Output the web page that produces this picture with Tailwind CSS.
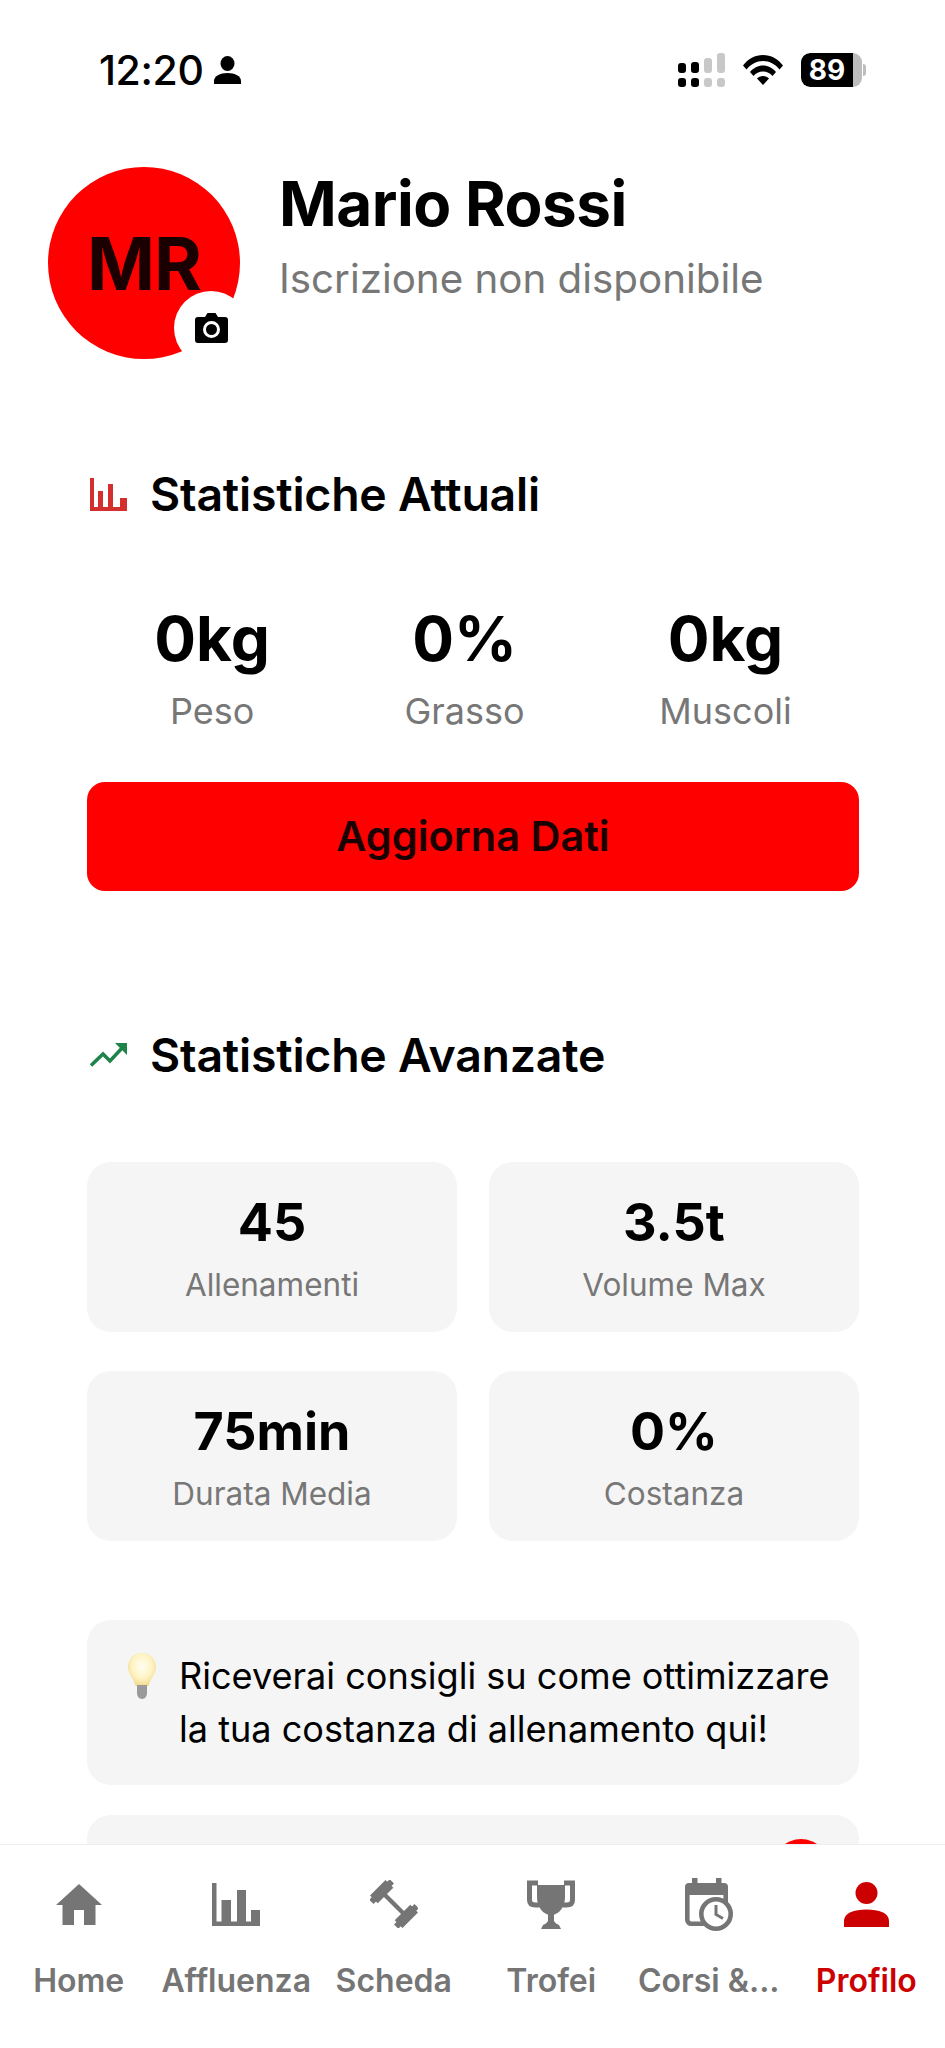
<!DOCTYPE html>
<html lang="it">

<head>
  <meta charset="UTF-8">
  <meta name="viewport" content="width=device-width, initial-scale=1.0">
  <title>Profilo</title>
  <script src="https://cdn.jsdelivr.net/npm/@tailwindcss/browser@4"></script>
</head>

<body class="bg-white text-black font-['Inter','Liberation_Sans',sans-serif]">
  <div class="flex flex-col h-[2048px] w-[945px] overflow-hidden">
    <main class="flex-1 min-h-0 overflow-hidden relative">
      <!-- status bar -->
      <div class="flex items-center justify-between h-[40px] mt-[50px] pl-[99px] pr-[79px]">
        <div class="flex items-center gap-[11px]">
          <span class="text-[41px] leading-[40px] font-medium tracking-[-0.4px]">12:20</span>
          <svg class="w-[27px] h-[28px]" viewBox="0 0 27 28" fill="#000">
            <ellipse cx="13.5" cy="7.5" rx="7" ry="7.5" />
            <path d="M0 28v-3c0-5 6-8 13.5-8S27 20 27 25v3z" />
          </svg>
        </div>
        <div class="flex items-center">
          <svg class="w-[47px] h-[34px]" viewBox="0 0 47 34">
            <rect x="0" y="10" width="8" height="10" rx="3" fill="#000" />
            <rect x="13" y="9" width="8" height="11" rx="3" fill="#000" />
            <rect x="26" y="5" width="8" height="15" rx="3" fill="#c8c8c8" />
            <rect x="39" y="0" width="8" height="20" rx="3" fill="#c8c8c8" />
            <rect x="0" y="25" width="8" height="9" rx="3" fill="#000" />
            <rect x="13" y="25" width="8" height="9" rx="3" fill="#000" />
            <rect x="26" y="25" width="8" height="9" rx="3" fill="#c8c8c8" />
            <rect x="39" y="25" width="8" height="9" rx="3" fill="#c8c8c8" />
          </svg>
          <svg class="w-[40px] h-[30px] ml-[18px]" viewBox="0 0 40 30" fill="#000">
            <path d="M0 10.500C5 4 12 0 20 0s15 4 20 10.500l-3.500 4C32 9 26.500 6 20 6S8 9 3.500 14.500z" />
            <path d="M7 17C10.500 13 15 10.500 20 10.500S29.500 13 33 17l-3.500 4C27 18 24 16.500 20 16.500S13 18 10.500 21z" />
            <path d="M14 23.500C15.500 22 17.500 21 20 21s4.500 1 6 2.500L20 30z" />
          </svg>
          <div class="flex items-center ml-[18px]">
            <div class="flex h-[34px] w-[61px] overflow-hidden rounded-[9px] bg-[#bdbdbd]">
              <div class="flex h-full w-[52px] items-center justify-center rounded-l-[9px] bg-black text-[28px] font-bold leading-none text-white">89</div>
            </div>
            <div class="ml-[1px] h-[12px] w-[3px] rounded-r-full bg-[#bdbdbd]"></div>
          </div>
        </div>
      </div>

      <!-- intestazione -->
      <div class="flex items-start mt-[77px] pl-[48px]">
        <div class="relative flex h-[192px] w-[192px] shrink-0 items-center justify-center rounded-full bg-[#ff0000]">
          <span class="text-[73px] font-bold leading-none tracking-[-1px] text-[#1a0000]">MR</span>
          <div class="absolute left-[126px] top-[124px] flex h-[74px] w-[74px] items-center justify-center rounded-full bg-white">
            <svg class="w-[33px] h-[30px]" viewBox="0 0 33 30">
              <path fill="#000" d="M3 4h7l2.500-4h8L23 4h7a3 3 0 0 1 3 3v20a3 3 0 0 1-3 3H3a3 3 0 0 1-3-3V7a3 3 0 0 1 3-3z" />
              <circle cx="16.500" cy="16.500" r="7" fill="none" stroke="#fff" stroke-width="3" />
            </svg>
          </div>
        </div>
        <div class="ml-[39px]">
          <h1 class="text-[62px] font-bold leading-[74px] tracking-[-0.5px]">Mario Rossi</h1>
          <p class="mt-[13px] text-[40.300px] leading-[50px] text-[#777777]">Iscrizione non disponibile</p>
        </div>
      </div>

      <div class="pl-[87px] pr-[86px]">
        <!-- statistiche attuali -->
        <div class="flex items-center mt-[112px] h-[46px]">
          <svg class="w-[37px] h-[33px] ml-[3px]" viewBox="0 0 37 33" fill="#d32f2f">
            <path d="M0 0h4v29h4V13h5v16h5V6h5v23h7V20h7v13H0z" />
          </svg>
          <h2 class="ml-[23px] text-[46.400px] font-semibold leading-[46px] tracking-[-0.2px]">Statistiche Attuali</h2>
        </div>

        <div class="flex justify-around mt-[87px] text-center">
          <div>
            <div class="text-[62px] font-bold leading-[70px]">0kg</div>
            <div class="mt-[15px] text-[36px] leading-[44px] text-[#777777]">Peso</div>
          </div>
          <div>
            <div class="text-[62px] font-bold leading-[70px]">0%</div>
            <div class="mt-[15px] text-[36px] leading-[44px] text-[#777777]">Grasso</div>
          </div>
          <div>
            <div class="text-[62px] font-bold leading-[70px]">0kg</div>
            <div class="mt-[15px] text-[36px] leading-[44px] text-[#777777]">Muscoli</div>
          </div>
        </div>

        <button class="mt-[49px] flex h-[109px] w-full items-center justify-center rounded-[18px] bg-[#ff0000] text-[41.500px] font-semibold text-[#1a0000]">Aggiorna Dati</button>

        <!-- statistiche avanzate -->
        <div class="flex items-center mt-[141px] h-[46px]">
          <svg class="w-[37px] h-[24px] ml-[3px]" viewBox="0 0 37 24" fill="none">
            <path d="M1 22.500 13 11l7 7L33 4" stroke="#1e8449" stroke-width="3.500" />
            <path d="M25 0h12v12z" fill="#1e8449" />
          </svg>
          <h2 class="ml-[23px] text-[46.400px] font-semibold leading-[46px] tracking-[-0.2px]">Statistiche Avanzate</h2>
        </div>

        <div class="grid grid-cols-2 gap-x-[32px] gap-y-[39px] mt-[84px]">
          <div class="flex h-[170px] flex-col items-center rounded-[24px] bg-[#f5f5f5] pt-[30px]">
            <div class="text-[52px] font-bold leading-[62px]">45</div>
            <div class="mt-[11px] text-[31.500px] leading-[40px] text-[#777777]">Allenamenti</div>
          </div>
          <div class="flex h-[170px] flex-col items-center rounded-[24px] bg-[#f5f5f5] pt-[30px]">
            <div class="text-[52px] font-bold leading-[62px]">3.5t</div>
            <div class="mt-[11px] text-[31.500px] leading-[40px] text-[#777777]">Volume Max</div>
          </div>
          <div class="flex h-[170px] flex-col items-center rounded-[24px] bg-[#f5f5f5] pt-[30px]">
            <div class="text-[52px] font-bold leading-[62px]">75min</div>
            <div class="mt-[11px] text-[31.500px] leading-[40px] text-[#777777]">Durata Media</div>
          </div>
          <div class="flex h-[170px] flex-col items-center rounded-[24px] bg-[#f5f5f5] pt-[30px]">
            <div class="text-[52px] font-bold leading-[62px]">0%</div>
            <div class="mt-[11px] text-[31.500px] leading-[40px] text-[#777777]">Costanza</div>
          </div>
        </div>

        <!-- consiglio -->
        <div class="flex items-start mt-[79px] h-[165px] rounded-[24px] bg-[#f5f5f5] pl-[41px] pt-[33px]">
          <svg class="w-[28px] h-[46px] shrink-0" viewBox="0 0 28 46">
            <defs>
              <radialGradient id="bulb" cx="50%" cy="40%" r="60%">
                <stop offset="0%" stop-color="#fffef2" />
                <stop offset="60%" stop-color="#fff3c4" />
                <stop offset="100%" stop-color="#f0d98c" />
              </radialGradient>
            </defs>
            <path fill="url(#bulb)" d="M14 0C6 0 0 6 0 14c0 7 5 10 7 18 1 2 13 2 14 0 2-8 7-11 7-18C28 6 22 0 14 0z" />
            <path fill="#9a9a9a" d="M9 32h10v8c0 3-2 6-5 6s-5-3-5-6z" />
          </svg>
          <p class="ml-[23px] text-[36.100px] leading-[53px] mt-[-3px]">Riceverai consigli su come ottimizzare<br>la tua costanza di allenamento qui!</p>
        </div>

        <!-- card successiva, tagliata dalla barra -->
        <div class="relative mt-[30px] h-[120px] rounded-[24px] bg-[#f5f5f5]">
          <div class="absolute left-[686px] top-[24px] h-[56px] w-[56px] rounded-full bg-[#ff0000]"></div>
        </div>
      </div>
    </main>

    <!-- barra di navigazione -->
    <nav class="grid h-[204px] shrink-0 grid-cols-6 border-t border-[#eeeeee] bg-white pt-[32px] text-[#757575]">
      <div class="flex flex-col items-center">
        <div class="flex h-[54px] items-center justify-center">
          <svg class="w-[46px] h-[41px]" viewBox="0 0 46 41" fill="#757575">
            <path d="M23 0 46 21h-6.500v20H28V26H18v15H6.500V21H0z" />
          </svg>
        </div>
        <span class="mt-[32px] text-[32px] font-semibold leading-[36px]">Home</span>
      </div>
      <div class="flex flex-col items-center">
        <div class="flex h-[54px] items-center justify-center">
          <svg class="w-[48px] h-[43px]" viewBox="0 0 48 43" fill="#757575">
            <path d="M0 0h4.500v38.500H9.500V17H19v21.500h6V7h9v31.500h5V27h9v16H0z" />
          </svg>
        </div>
        <span class="mt-[32px] text-[32px] font-semibold leading-[36px]">Affluenza</span>
      </div>
      <div class="flex flex-col items-center">
        <div class="flex h-[54px] items-center justify-center">
          <svg class="w-[48px] h-[48px]" viewBox="0 0 48 48" fill="#757575">
            <g transform="rotate(-45 24 24)">
              <rect x="21.800" y="8" width="4.400" height="32" />
              <rect x="13" y="1" width="22" height="11" />
              <rect x="9.500" y="3.500" width="29" height="6" />
              <rect x="13" y="36" width="22" height="11" />
              <rect x="9.500" y="38.500" width="29" height="6" />
            </g>
          </svg>
        </div>
        <span class="mt-[32px] text-[32px] font-semibold leading-[36px]">Scheda</span>
      </div>
      <div class="flex flex-col items-center">
        <div class="flex h-[54px] items-center justify-center">
          <svg class="w-[48px] h-[49px]" viewBox="0 0 48 49" fill="#757575">
            <path d="M11 3H2.500v17c0 3 2 5 6 5h4M37 3h8.500v17c0 3-2 5-6 5h-4" fill="none" stroke="#757575" stroke-width="5" />
            <path d="M10 5h28v12c0 10-6 18-14 18S10 27 10 17z" />
            <path d="M21 33h6v8c1 2 3 3 5 4l2 4H14l2-4c2-1 4-2 5-4z" />
          </svg>
        </div>
        <span class="mt-[32px] text-[32px] font-semibold leading-[36px]">Trofei</span>
      </div>
      <div class="flex flex-col items-center">
        <div class="flex h-[54px] items-center justify-center">
          <svg class="w-[48px] h-[53px]" viewBox="0 0 48 53" fill="#757575">
            <rect x="7" y="0" width="5.500" height="8" />
            <rect x="31" y="0" width="5.500" height="8" />
            <rect x="2.300" y="7.300" width="38.400" height="38.400" rx="4" fill="none" stroke="#757575" stroke-width="4.600" />
            <rect x="0" y="5" width="43" height="12" rx="4" />
            <circle cx="31" cy="36" r="14.700" fill="#fff" stroke="#757575" stroke-width="4.600" />
            <path d="M31 27v9.500l7 4" fill="none" stroke="#757575" stroke-width="3" />
          </svg>
        </div>
        <span class="mt-[32px] text-[32px] font-semibold leading-[36px]">Corsi &amp;...</span>
      </div>
      <div class="flex flex-col items-center text-[#cc0000]">
        <div class="flex h-[54px] items-center justify-center">
          <svg class="w-[45px] h-[45px]" viewBox="0 0 45 45" fill="#cc0000">
            <circle cx="22.500" cy="11" r="11" />
            <path d="M0 45v-6c0-8 10-11.500 22.500-11.500S45 31 45 39v6z" />
          </svg>
        </div>
        <span class="mt-[32px] text-[32px] font-semibold leading-[36px]">Profilo</span>
      </div>
    </nav>
  </div>
</body>

</html>
